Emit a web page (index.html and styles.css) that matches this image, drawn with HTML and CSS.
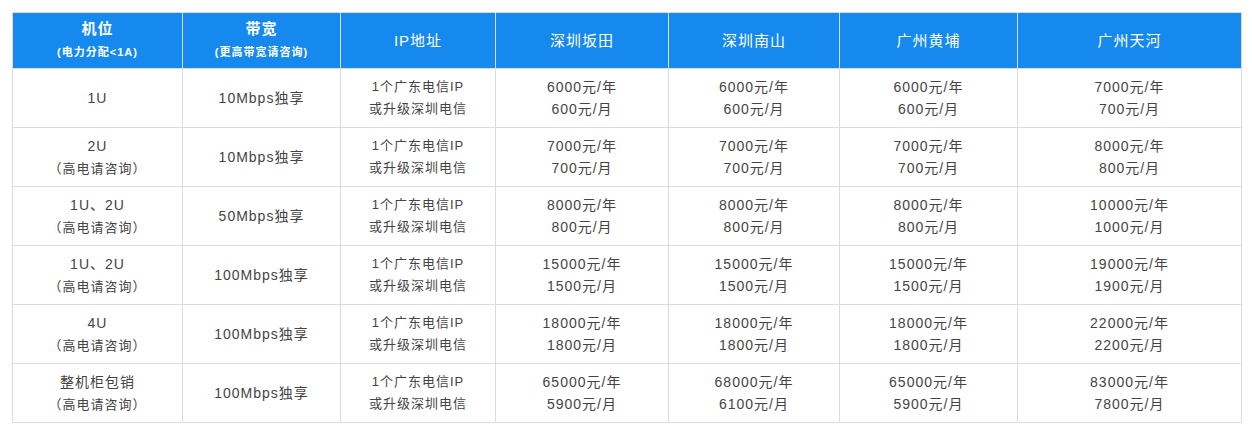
FILE: index.html
```html
<!DOCTYPE html>
<html lang="zh-CN">
<head>
<meta charset="utf-8">
<title>机位价格</title>
<link rel="stylesheet" href="styles.css">
</head>
<body>
<table class="price-table">
  <colgroup>
    <col class="c1"><col class="c2"><col class="c3"><col class="c4"><col class="c5"><col class="c6"><col class="c7">
  </colgroup>
  <thead>
    <tr>
      <th><span class="main strong">机位</span><br><span class="sub">(电力分配&lt;1A)</span></th>
      <th><span class="main strong">带宽</span><br><span class="sub">(更高带宽请咨询)</span></th>
      <th><span class="main">IP地址</span></th>
      <th><span class="main">深圳坂田</span></th>
      <th><span class="main">深圳南山</span></th>
      <th><span class="main">广州黄埔</span></th>
      <th><span class="main">广州天河</span></th>
    </tr>
  </thead>
  <tbody>
    <tr>
      <td>1U</td>
      <td>10Mbps独享</td>
      <td class="ip">1个广东电信IP<br>或升级深圳电信</td>
      <td>6000元/年<br>600元/月</td>
      <td>6000元/年<br>600元/月</td>
      <td>6000元/年<br>600元/月</td>
      <td>7000元/年<br>700元/月</td>
    </tr>
    <tr>
      <td>2U<br><span class="note">（高电请咨询）</span></td>
      <td>10Mbps独享</td>
      <td class="ip">1个广东电信IP<br>或升级深圳电信</td>
      <td>7000元/年<br>700元/月</td>
      <td>7000元/年<br>700元/月</td>
      <td>7000元/年<br>700元/月</td>
      <td>8000元/年<br>800元/月</td>
    </tr>
    <tr>
      <td>1U、2U<br><span class="note">（高电请咨询）</span></td>
      <td>50Mbps独享</td>
      <td class="ip">1个广东电信IP<br>或升级深圳电信</td>
      <td>8000元/年<br>800元/月</td>
      <td>8000元/年<br>800元/月</td>
      <td>8000元/年<br>800元/月</td>
      <td>10000元/年<br>1000元/月</td>
    </tr>
    <tr>
      <td>1U、2U<br><span class="note">（高电请咨询）</span></td>
      <td>100Mbps独享</td>
      <td class="ip">1个广东电信IP<br>或升级深圳电信</td>
      <td>15000元/年<br>1500元/月</td>
      <td>15000元/年<br>1500元/月</td>
      <td>15000元/年<br>1500元/月</td>
      <td>19000元/年<br>1900元/月</td>
    </tr>
    <tr>
      <td>4U<br><span class="note">（高电请咨询）</span></td>
      <td>100Mbps独享</td>
      <td class="ip">1个广东电信IP<br>或升级深圳电信</td>
      <td>18000元/年<br>1800元/月</td>
      <td>18000元/年<br>1800元/月</td>
      <td>18000元/年<br>1800元/月</td>
      <td>22000元/年<br>2200元/月</td>
    </tr>
    <tr>
      <td>整机柜包销<br><span class="note">（高电请咨询）</span></td>
      <td>100Mbps独享</td>
      <td class="ip">1个广东电信IP<br>或升级深圳电信</td>
      <td>65000元/年<br>5900元/月</td>
      <td>68000元/年<br>6100元/月</td>
      <td>65000元/年<br>5900元/月</td>
      <td>83000元/年<br>7800元/月</td>
    </tr>
  </tbody>
</table>
</body>
</html>
```
FILE: styles.css
```css
html, body {
  margin: 0;
  padding: 0;
  background: #fff;
}
body {
  padding: 12px;
  font-family: "Liberation Sans", Arial, "Noto Sans CJK SC", sans-serif;
  color: #444;
}
.price-table {
  border-collapse: collapse;
  table-layout: fixed;
  width: 1229px;
}
.c1 { width: 170px; }
.c2 { width: 158px; }
.c3 { width: 155px; }
.c4 { width: 173px; }
.c5 { width: 171px; }
.c6 { width: 178px; }
.c7 { width: 224px; }

.price-table th,
.price-table td {
  border: 1px solid #dcdcdc;
  text-align: center;
  vertical-align: middle;
  padding: 0;
  letter-spacing: 1px;
}
.price-table th {
  background: #1589ee;
  color: #fff;
  height: 55px;
  line-height: 22px;
  font-weight: normal;
}
.main {
  font-size: 15px;
}
.main.strong {
  font-weight: bold;
}
.sub {
  font-size: 11px;
  font-weight: bold;
}
.price-table td {
  height: 58px;
  font-size: 14px;
  line-height: 22px;
}
.price-table td.ip {
  font-size: 13px;
}
.note {
  font-size: 13px;
}
```
